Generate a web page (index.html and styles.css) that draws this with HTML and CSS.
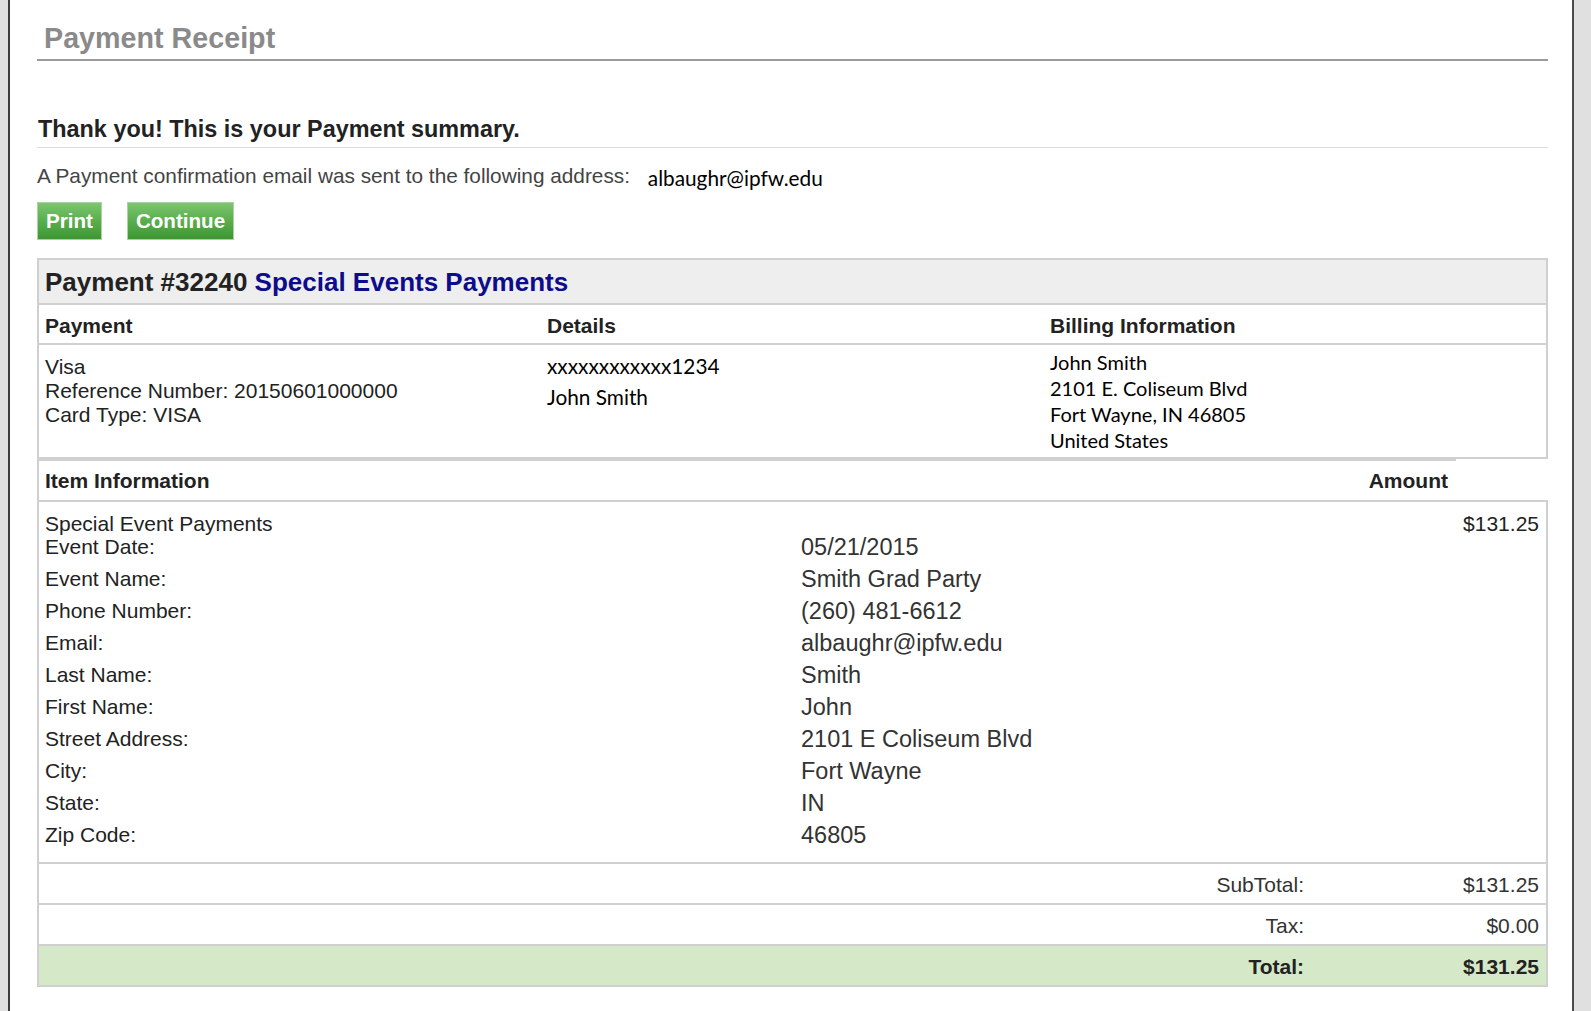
FILE: index.html
```html
<!DOCTYPE html>
<html>

<head>
    <title>Payment Receipt</title>
    <meta charset="UTF-8" />
    <link rel="stylesheet" href="styles.css">
</head>

<body>
    <div class="page">
        <h1 class="pageTitle">Payment Receipt</h1>

        <h2 class="summaryTitle">Thank you! This is your Payment summary.</h2>
        <p class="confirm">A Payment confirmation email was sent to the following address: <span class="confirm__email">albaughr@ipfw.edu</span></p>

        <div class="actions">
            <button class="btn">Print</button>
            <button class="btn">Continue</button>
        </div>

        <!-- Receipt - START -->
        <div class="receipt">
            <div class="receipt__title">Payment #32240 <span class="receipt__type">Special Events Payments</span></div>

            <table class="info">
                <tr>
                    <th>Payment</th>
                    <th>Details</th>
                    <th>Billing Information</th>
                </tr>
                <tr>
                    <td class="info__payment">
                        Visa<br>
                        Reference Number: 20150601000000<br>
                        Card Type: VISA
                    </td>
                    <td class="info__details">
                        xxxxxxxxxxxx1234<br>
                        John Smith
                    </td>
                    <td class="info__billing">
                        John Smith<br>
                        2101 E. Coliseum Blvd<br>
                        Fort Wayne, IN 46805<br>
                        United States
                    </td>
                </tr>
            </table>

            <div class="items__head">
                <span>Item Information</span>
                <span>Amount</span>
            </div>
            <div class="items__body">
                <div class="items__desc">
                    <div class="items__name">Special Event Payments</div>
                    <div class="items__fields">
                        <span>Event Date:</span><span class="items__value">05/21/2015</span>
                        <span>Event Name:</span><span class="items__value">Smith Grad Party</span>
                        <span>Phone Number:</span><span class="items__value">(260) 481-6612</span>
                        <span>Email:</span><span class="items__value">albaughr@ipfw.edu</span>
                        <span>Last Name:</span><span class="items__value">Smith</span>
                        <span>First Name:</span><span class="items__value">John</span>
                        <span>Street Address:</span><span class="items__value">2101 E Coliseum Blvd</span>
                        <span>City:</span><span class="items__value">Fort Wayne</span>
                        <span>State:</span><span class="items__value">IN</span>
                        <span>Zip Code:</span><span class="items__value">46805</span>
                    </div>
                </div>
                <div class="items__amount">$131.25</div>
            </div>

            <div class="totals">
                <span>SubTotal:</span>
                <span>$131.25</span>
            </div>
            <div class="totals">
                <span>Tax:</span>
                <span>$0.00</span>
            </div>
            <div class="totals totals--grand">
                <span>Total:</span>
                <span>$131.25</span>
            </div>
        </div>
        <!-- Receipt - END -->
    </div>
</body>

</html>
```

FILE: styles.css
```css
/* Page frame - START */
:root {
    --line: #d0d0d0;
    --text: #222;
    --green-top: #7cc570;
    --green-bottom: #3e9633;
    --total-bg: #d5e8c7;
}

html,
body {
    margin: 0;
    height: 100%;
}

body {
    background-color: #e0e0e0;
    font-family: "Liberation Sans", Arial, sans-serif;
    color: var(--text);
    overflow: hidden;
}

.page {
    box-sizing: border-box;
    min-height: 100vh;
    margin: 0 17px 0 8px;
    padding: 0 24px 0 27px;
    background-color: white;
    border-left: 2px solid #3c3c3c;
    border-right: 2px solid #4a4a4a;
}

.pageTitle {
    margin: 0;
    padding: 22px 0 5px 7px;
    font-size: 28.7px;
    line-height: 32px;
    color: #8a8a8a;
    border-bottom: 2px solid #9a9a9a;
}

.summaryTitle {
    margin: 55px 0 0;
    padding: 0 0 5px 1px;
    font-size: 23.4px;
    line-height: 26px;
    border-bottom: 1px solid #dcdcdc;
}

.confirm {
    height: 24px;
    margin: 16px 0 0;
    font-size: 20.8px;
    line-height: 24px;
    color: #444;
}

.confirm__email {
    margin-left: 12px;
    font-family: Lato, "Open Sans", sans-serif;
    font-size: 20.8px;
    line-height: 14px;
    vertical-align: -3px;
    color: black;
}

.actions {
    display: flex;
    gap: 25px;
    margin-top: 14px;
}

.btn {
    padding: 6px 8px;
    font-family: "Liberation Sans", Arial, sans-serif;
    font-size: 20.6px;
    line-height: 24px;
    font-weight: bold;
    color: white;
    border: 1px solid #a9d3a0;
    background: linear-gradient(to bottom, var(--green-top) 0%, #5aae4d 50%, var(--green-bottom) 100%);
    cursor: pointer;
}

/* Page frame - END */

/* Receipt - START */
.receipt {
    margin-top: 18px;
    font-size: 21px;
}

.receipt__title {
    padding: 7px 6px 6px;
    font-size: 26px;
    line-height: 30px;
    font-weight: bold;
    background-color: #eeeeee;
    border: 2px solid var(--line);
}

.receipt__type {
    color: #0c0c8c;
}

.info {
    width: 100%;
    table-layout: fixed;
    border-collapse: collapse;
    border-left: 2px solid var(--line);
    border-right: 2px solid var(--line);
    border-bottom: 2px solid var(--line);
}

.info th {
    padding: 9px 6px 5px;
    text-align: left;
    line-height: 24px;
    border-bottom: 2px solid var(--line);
}

.info td {
    vertical-align: top;
    padding: 0 6px 4px;
}

.info__payment {
    padding-top: 10px !important;
    line-height: 24px;
}

.info__details,
.info__billing {
    font-family: Lato, "Open Sans", sans-serif;
    font-size: 20px;
    color: black;
}

.info__details {
    padding-top: 5px !important;
    font-size: 20.8px !important;
    line-height: 31px;
}

.info__billing {
    padding-top: 4px !important;
    line-height: 26px;
}

.items__head {
    display: flex;
    justify-content: space-between;
    margin-right: 92px;
    padding: 8px 8px 7px 6px;
    line-height: 24px;
    font-weight: bold;
    border-top: 2px solid var(--line);
    border-left: 2px solid var(--line);
}

.items__body {
    display: flex;
    border: 2px solid var(--line);
}

.items__desc {
    flex: 1;
    padding: 12px 6px 14px;
}

.items__name {
    line-height: 20px;
}

.items__fields {
    display: grid;
    grid-template-columns: 756px 1fr;
    row-gap: 6px;
    line-height: 26px;
}

.items__value {
    font-size: 23.5px;
    color: #333;
}

.items__amount {
    padding: 12px 7px 0 0;
    line-height: 20px;
}

.totals {
    display: grid;
    grid-template-columns: 1fr 234px;
    padding: 9px 0 6px;
    line-height: 24px;
    text-align: right;
    color: #333;
    border: 2px solid var(--line);
    border-top: none;
}

.totals>span:first-child {
    padding-right: 8px;
}

.totals>span:last-child {
    padding-right: 7px;
}

.totals--grand {
    font-weight: bold;
    color: var(--text);
    background-color: var(--total-bg);
}

/* Receipt - END */
```
